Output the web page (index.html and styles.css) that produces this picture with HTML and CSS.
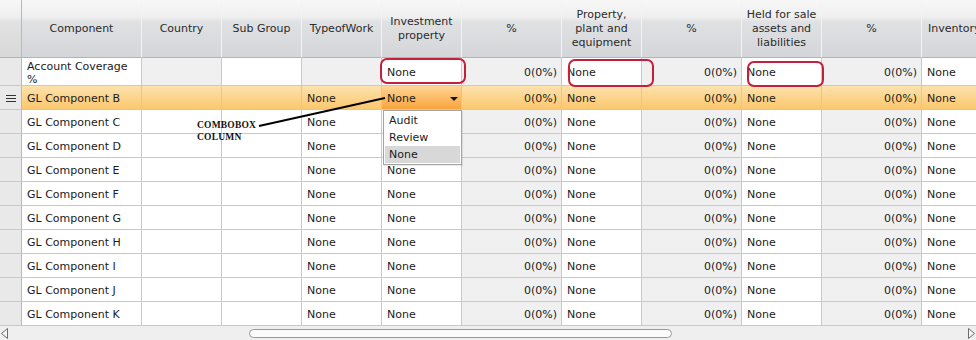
FILE: index.html
```html
<!DOCTYPE html>
<html>
<head>
<meta charset="utf-8">
<link rel="stylesheet" href="styles.css">
</head>
<body>
<div class="grid">
  <div class="row head">
    <div class="c rh"></div>
    <div class="c">Component</div>
    <div class="c">Country</div>
    <div class="c">Sub Group</div>
    <div class="c">TypeofWork</div>
    <div class="c">Investment<br>property</div>
    <div class="c">%</div>
    <div class="c">Property,<br>plant and<br>equipment</div>
    <div class="c">%</div>
    <div class="c">Held for sale<br>assets and<br>liabilities</div>
    <div class="c">%</div>
    <div class="c left">Inventory</div>
  </div>

  <div class="row ra">
    <div class="c rh"></div>
    <div class="c wrap">Account Coverage<br>%</div>
    <div class="c g"></div>
    <div class="c"></div>
    <div class="c g"></div>
    <div class="c ov">None<span class="hl hl-inv"></span></div>
    <div class="c g num">0(0%)</div>
    <div class="c ov">None<span class="hl hl-prop"></span></div>
    <div class="c g num">0(0%)</div>
    <div class="c ov">None<span class="hl hl-held"></span></div>
    <div class="c g num">0(0%)</div>
    <div class="c">None</div>
  </div>

  <div class="row r sel">
    <div class="c rh"><svg class="grip" width="10" height="7" viewBox="0 0 10 7"><path d="M0 0.5H10M0 3.5H10M0 6.5H10" stroke="#333" stroke-width="1"/></svg></div>
    <div class="c">GL Component B</div>
    <div class="c"></div>
    <div class="c"></div>
    <div class="c">None</div>
    <div class="c ov edit">None<span class="arrow"></span>
      <div class="popup">
        <div class="opt">Audit</div>
        <div class="opt">Review</div>
        <div class="opt on">None</div>
      </div>
    </div>
    <div class="c num">0(0%)</div>
    <div class="c">None</div>
    <div class="c num">0(0%)</div>
    <div class="c">None</div>
    <div class="c num">0(0%)</div>
    <div class="c">None</div>
  </div>

  <div class="row r"><div class="c rh"></div><div class="c">GL Component C</div><div class="c"></div><div class="c"></div><div class="c">None</div><div class="c"></div><div class="c g num">0(0%)</div><div class="c">None</div><div class="c g num">0(0%)</div><div class="c">None</div><div class="c g num">0(0%)</div><div class="c">None</div></div>
  <div class="row r"><div class="c rh"></div><div class="c">GL Component D</div><div class="c"></div><div class="c"></div><div class="c">None</div><div class="c"></div><div class="c g num">0(0%)</div><div class="c">None</div><div class="c g num">0(0%)</div><div class="c">None</div><div class="c g num">0(0%)</div><div class="c">None</div></div>
  <div class="row r"><div class="c rh"></div><div class="c">GL Component E</div><div class="c"></div><div class="c"></div><div class="c">None</div><div class="c">None</div><div class="c g num">0(0%)</div><div class="c">None</div><div class="c g num">0(0%)</div><div class="c">None</div><div class="c g num">0(0%)</div><div class="c">None</div></div>
  <div class="row r"><div class="c rh"></div><div class="c">GL Component F</div><div class="c"></div><div class="c"></div><div class="c">None</div><div class="c">None</div><div class="c g num">0(0%)</div><div class="c">None</div><div class="c g num">0(0%)</div><div class="c">None</div><div class="c g num">0(0%)</div><div class="c">None</div></div>
  <div class="row r"><div class="c rh"></div><div class="c">GL Component G</div><div class="c"></div><div class="c"></div><div class="c">None</div><div class="c">None</div><div class="c g num">0(0%)</div><div class="c">None</div><div class="c g num">0(0%)</div><div class="c">None</div><div class="c g num">0(0%)</div><div class="c">None</div></div>
  <div class="row r"><div class="c rh"></div><div class="c">GL Component H</div><div class="c"></div><div class="c"></div><div class="c">None</div><div class="c">None</div><div class="c g num">0(0%)</div><div class="c">None</div><div class="c g num">0(0%)</div><div class="c">None</div><div class="c g num">0(0%)</div><div class="c">None</div></div>
  <div class="row r"><div class="c rh"></div><div class="c">GL Component I</div><div class="c"></div><div class="c"></div><div class="c">None</div><div class="c">None</div><div class="c g num">0(0%)</div><div class="c">None</div><div class="c g num">0(0%)</div><div class="c">None</div><div class="c g num">0(0%)</div><div class="c">None</div></div>
  <div class="row r"><div class="c rh"></div><div class="c">GL Component J</div><div class="c"></div><div class="c"></div><div class="c">None</div><div class="c">None</div><div class="c g num">0(0%)</div><div class="c">None</div><div class="c g num">0(0%)</div><div class="c">None</div><div class="c g num">0(0%)</div><div class="c">None</div></div>
  <div class="row r"><div class="c rh"></div><div class="c">GL Component K</div><div class="c"></div><div class="c"></div><div class="c">None</div><div class="c">None</div><div class="c g num">0(0%)</div><div class="c">None</div><div class="c g num">0(0%)</div><div class="c">None</div><div class="c g num">0(0%)</div><div class="c">None</div></div>

  <div class="hscroll">
    <svg class="sarrow" width="9" height="13" viewBox="0 0 9 13"><path d="M7.5 1.5 L1.5 6.5 L7.5 11.5 Z" fill="#f4f4f4" stroke="#6e6e6e" stroke-width="1"/></svg>
    <div class="track"><div class="thumb"></div></div>
    <svg class="sarrow" width="9" height="13" viewBox="0 0 9 13"><path d="M1.5 1.5 L7.5 6.5 L1.5 11.5 Z" fill="#f4f4f4" stroke="#6e6e6e" stroke-width="1"/></svg>
  </div>

  <svg class="annot-line" width="976" height="340" viewBox="0 0 976 340"><path d="M259 126 L385 98" stroke="#000" stroke-width="2" fill="none"/></svg>
  <div class="annot-text">COMBOBOX<br>COLUMN</div>
</div>
</body>
</html>
```

FILE: styles.css
```css
html, body {
  margin: 0;
  padding: 0;
}
body {
  width: 976px;
  height: 340px;
  overflow: hidden;
  background: #fff;
  font-family: "DejaVu Sans", Verdana, sans-serif;
  font-size: 11px;
  color: #1b1b1b;
}
.grid {
  position: relative;
  width: 976px;
  height: 340px;
  overflow: hidden;
}
.row {
  display: grid;
  grid-template-columns: 22px 120px 80px 80px 80px 80px 100px 80px 100px 80px 100px 80px;
  width: 1002px;
}
.c {
  box-sizing: border-box;
  border-right: 1px solid #c9c9c9;
  border-bottom: 1px solid #c9c9c9;
  padding: 2px 5px 0 5px;
  display: flex;
  align-items: center;
  white-space: nowrap;
  overflow: hidden;
  position: relative;
}
.c.ov {
  overflow: visible;
}
.head {
  height: 58px;
  background: linear-gradient(#f7f7f7 0, #efefef 17px, #e0e1e3 22px, #d3d5d8 100%);
}
.head .c {
  justify-content: center;
  text-align: center;
  line-height: 14px;
  color: #2b2b2b;
  border-right: 1px solid #f3f3f3;
  border-bottom: 1px solid #b4b4b4;
  padding: 1px 2px 0 2px;
}
.head .c.left {
  justify-content: flex-start;
  padding-left: 6px;
}
.head .c.rh {
  border-right: 1px solid #b9b9b9;
  background: linear-gradient(#f7f7f7 0, #efefef 17px, #e2e2e2 22px, #d8d8d8 100%);
}
.ra {
  height: 28px;
}
.r {
  height: 24px;
}
.wrap {
  line-height: 13px;
  white-space: normal;
}
.rh {
  background: #e9e9e9;
  border-right: 1px solid #b9b9b9;
  padding: 0;
  justify-content: center;
}
.g {
  background: #f0f0f0;
}
.num {
  justify-content: flex-end;
  padding-right: 4px;
}
.sel .c {
  background: linear-gradient(#fde2ad, #fbc76d);
}
.sel .c.rh {
  background: #e9e9e9;
  padding-top: 1px;
}
.sel .c.edit {
  background: linear-gradient(#ffd596, #f8a43c);
}
.grip {
  display: block;
}
.arrow {
  position: absolute;
  right: 3px;
  top: 11px;
  width: 0;
  height: 0;
  border-left: 4px solid transparent;
  border-right: 4px solid transparent;
  border-top: 4px solid #111;
}
.popup {
  position: absolute;
  left: 1px;
  top: 24px;
  width: 79px;
  box-sizing: border-box;
  border: 1px solid #a3a3a3;
  background: #fff;
  padding: 1px;
  z-index: 5;
  box-shadow: 1px 1px 1px rgba(0,0,0,0.08);
}
.opt {
  height: 17px;
  line-height: 18px;
  padding-left: 4px;
  color: #1b1b1b;
}
.opt.on {
  background: #d8d8d8;
}
.hl {
  position: absolute;
  box-sizing: border-box;
  border: 2px solid #c41f3b;
  border-radius: 7px;
  z-index: 3;
}
.hl-inv {
  left: -2px;
  top: 0;
  width: 86px;
  height: 26px;
}
.hl-prop {
  left: 6px;
  top: 1px;
  width: 86px;
  height: 28px;
}
.hl-held {
  left: 5px;
  top: 3px;
  width: 77px;
  height: 26px;
}
.hscroll {
  width: 976px;
  height: 14px;
  background: #efefef;
  display: flex;
  align-items: center;
}
.sarrow {
  display: block;
  flex: none;
}
.track {
  flex: 1;
  display: flex;
  align-items: center;
}
.thumb {
  margin-left: 240px;
  width: 423px;
  height: 9px;
  box-sizing: border-box;
  border: 1px solid #9a9a9a;
  border-radius: 5px;
  background: #fbfbfb;
}
.annot-line {
  position: absolute;
  left: 0;
  top: 0;
  pointer-events: none;
  z-index: 6;
}
.annot-text {
  position: absolute;
  left: 197px;
  top: 119px;
  font-family: "Liberation Serif", "Times New Roman", serif;
  font-weight: bold;
  font-size: 9.5px;
  line-height: 12px;
  letter-spacing: 0.2px;
  color: #111;
  z-index: 6;
}
```
